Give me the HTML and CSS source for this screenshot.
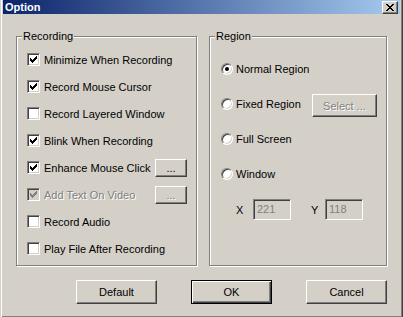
FILE: index.html
```html
<!DOCTYPE html>
<html lang="en">
<head>
    <meta charset="UTF-8">
    <title>Option</title>
    <link rel="stylesheet" href="styles.css">
</head>
<body>
    <div class="window">
        <div class="titlebar">
            <span class="title">Option</span>
            <button class="close-button" aria-label="Close">
                <svg width="8" height="7" viewBox="0 0 8 7" shape-rendering="crispEdges">
                    <path d="M0 0h2v1h-2zM6 0h2v1h-2zM1 1h2v1h-2zM5 1h2v1h-2zM2 2h4v1h-4zM3 3h2v1h-2zM2 4h4v1h-4zM1 5h2v1h-2zM5 5h2v1h-2zM0 6h2v1h-2zM6 6h2v1h-2z" fill="#000"/>
                </svg>
            </button>
        </div>

        <div class="content">
            <div class="groups">
                <div class="group recording">
                    <span class="group-title">Recording</span>
                    <ul class="options">
                        <li class="option"><span class="check checked"></span><span class="label">Minimize When Recording</span></li>
                        <li class="option"><span class="check checked"></span><span class="label">Record Mouse Cursor</span></li>
                        <li class="option"><span class="check"></span><span class="label">Record Layered Window</span></li>
                        <li class="option"><span class="check checked"></span><span class="label">Blink When Recording</span></li>
                        <li class="option"><span class="check checked"></span><span class="label wide">Enhance Mouse Click</span><button class="button small">...</button></li>
                        <li class="option disabled"><span class="check checked"></span><span class="label wide">Add Text On Video</span><button class="button small" disabled>...</button></li>
                        <li class="option"><span class="check"></span><span class="label">Record Audio</span></li>
                        <li class="option"><span class="check"></span><span class="label">Play File After Recording</span></li>
                    </ul>
                </div>

                <div class="group region">
                    <span class="group-title">Region</span>
                    <ul class="options">
                        <li class="radio-row"><span class="radio selected"></span><span class="label">Normal Region</span></li>
                        <li class="radio-row"><span class="radio"></span><span class="label wide">Fixed Region</span><button class="button select" disabled>Select ...</button></li>
                        <li class="radio-row"><span class="radio"></span><span class="label">Full Screen</span></li>
                        <li class="radio-row"><span class="radio"></span><span class="label">Window</span></li>
                    </ul>
                    <div class="coords">
                        <span class="coord-label">X</span>
                        <span class="field">221</span>
                        <span class="coord-label y">Y</span>
                        <span class="field">118</span>
                    </div>
                </div>
            </div>

            <div class="actions">
                <button class="button action">Default</button>
                <button class="button action default">OK</button>
                <button class="button action">Cancel</button>
            </div>
        </div>
    </div>
</body>
</html>
```

FILE: styles.css
```css
* {
    margin: 0;
    padding: 0;
    box-sizing: border-box;
}

body {
    font-family: 'Liberation Sans', Arial, sans-serif;
    font-size: 11px;
    color: #000;
    background: #d4d0c8;
}

.window {
    width: 403px;
    height: 317px;
    background: #d4d0c8;
    border-left: 1px solid #d4d0c8;
    border-right: 1px solid #404040;
    box-shadow: inset 1px 0 #fff, inset -1px -1px #808080;
    padding: 0 2px 1px 2px;
}

/* title bar */
.titlebar {
    height: 14px;
    display: flex;
    align-items: center;
    justify-content: space-between;
    padding: 0 2px 0 2px;
    background: linear-gradient(90deg, #0a246a 0%, #a6caf0 100%);
}

.title {
    color: #fff;
    font-weight: bold;
    font-size: 11px;
    line-height: 14px;
}

.close-button {
    width: 16px;
    height: 13px;
    margin-top: 1px;
    display: flex;
    align-items: center;
    justify-content: center;
    background: #d4d0c8;
    border: 1px solid;
    border-color: #fff #404040 #404040 #fff;
    box-shadow: inset -1px -1px #808080;
}

/* content */
.content {
    padding: 22px 0 0 13px;
}

.groups {
    display: flex;
    gap: 12px;
}

.group {
    position: relative;
    height: 230px;
    border: 1px solid #808080;
    box-shadow: inset 1px 1px #fff, 1px 1px #fff;
}

.group-title {
    position: absolute;
    top: -7px;
    left: 5px;
    padding: 0 1px;
    line-height: 13px;
    background: #d4d0c8;
}

.recording {
    width: 181px;
    padding: 9px 0 0 10px;
}

.region {
    width: 178px;
    padding: 14px 0 0 11px;
}

.options {
    list-style: none;
}

/* checkboxes */
.option {
    height: 27px;
    display: flex;
    align-items: center;
}

.check {
    width: 13px;
    height: 13px;
    flex: none;
    margin-right: 4px;
    background: #fff;
    border: 1px solid;
    border-color: #808080 #fff #fff #808080;
    box-shadow: inset 1px 1px #404040, inset -1px -1px #d4d0c8;
}

.check.checked {
    background: #fff url("data:image/svg+xml,%3Csvg xmlns='http://www.w3.org/2000/svg' width='7' height='7' shape-rendering='crispEdges'%3E%3Cpath d='M6 0h1v1h-1zM5 1h2v1h-2zM0 2h1v1h-1zM4 2h3v1h-3zM0 3h2v1h-2zM3 3h3v1h-3zM0 4h5v1h-5zM1 5h3v1h-3zM2 6h1v1h-1z' fill='%23000'/%3E%3C/svg%3E") no-repeat 2px 2px;
}

.option.disabled .check {
    background-color: #d4d0c8;
    background-image: url("data:image/svg+xml,%3Csvg xmlns='http://www.w3.org/2000/svg' width='7' height='7' shape-rendering='crispEdges'%3E%3Cpath d='M6 0h1v1h-1zM5 1h2v1h-2zM0 2h1v1h-1zM4 2h3v1h-3zM0 3h2v1h-2zM3 3h3v1h-3zM0 4h5v1h-5zM1 5h3v1h-3zM2 6h1v1h-1z' fill='%23808080'/%3E%3C/svg%3E");
}

.option.disabled .label {
    color: #808080;
    text-shadow: 1px 1px #fff;
}

.option .label.wide {
    width: 111px;
}

/* radios */
.radio-row {
    height: 35px;
    display: flex;
    align-items: center;
}

.radio {
    width: 12px;
    height: 12px;
    flex: none;
    margin-right: 3px;
    border-radius: 50%;
    background: #fff;
    border: 1px solid;
    border-color: #808080 #fff #fff #808080;
    box-shadow: inset 1px 1px #404040, inset -1px -1px #d4d0c8;
    display: flex;
    align-items: center;
    justify-content: center;
}

.radio.selected::after {
    content: "";
    width: 4px;
    height: 4px;
    border-radius: 50%;
    background: #000;
}

.radio-row .label.wide {
    width: 76px;
}

/* buttons */
.button {
    font-family: inherit;
    font-size: 11px;
    color: #000;
    background: #d4d0c8;
    border: 1px solid;
    border-color: #fff #404040 #404040 #fff;
    box-shadow: inset -1px -1px #808080;
}

.button:disabled {
    color: #808080;
    text-shadow: 1px 1px #fff;
}

.button.small {
    width: 32px;
    height: 18px;
    line-height: 10px;
}

.button.select {
    width: 65px;
    height: 23px;
    margin-top: 4px;
}

.coords {
    display: flex;
    align-items: center;
    margin-top: 8px;
    padding-left: 15px;
}

.coord-label {
    width: 17px;
}

.coord-label.y {
    width: 14px;
    margin-left: 20px;
}

.field {
    width: 38px;
    height: 21px;
    line-height: 19px;
    padding-left: 3px;
    color: #808080;
    background: #d4d0c8;
    border: 1px solid;
    border-color: #808080 #fff #fff #808080;
    box-shadow: inset 1px 1px #404040, inset -1px -1px #d4d0c8;
}

/* dialog buttons */
.actions {
    display: flex;
    justify-content: flex-end;
    gap: 34px;
    margin-top: 14px;
    padding-right: 13px;
}

.button.action {
    width: 81px;
    height: 24px;
}

.button.default {
    border: 1px solid #000;
    box-shadow: inset 1px 1px #fff, inset -1px -1px #404040, inset -2px -2px #808080;
}
```
